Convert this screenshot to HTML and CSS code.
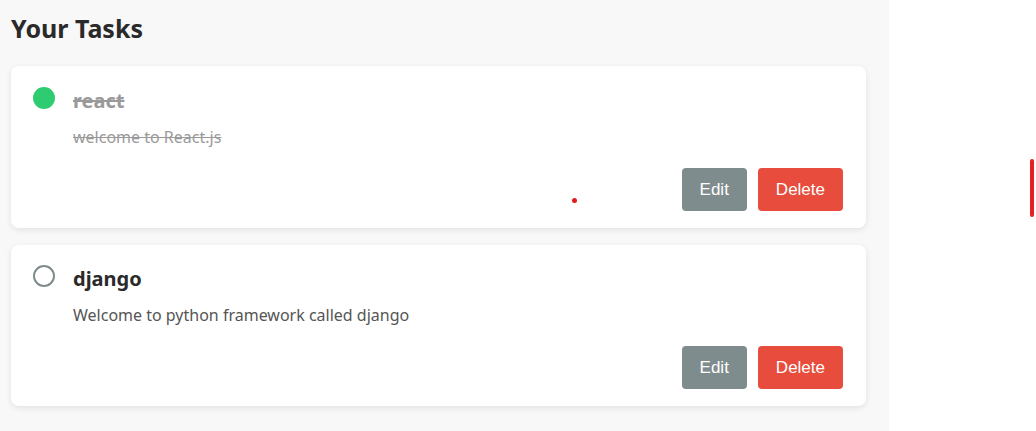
FILE: index.html
```html
<!DOCTYPE html>
<html>
<head>
<meta charset="utf-8">
<link rel="stylesheet" href="styles.css">
</head>
<body>
<div class="page">
  <main class="tasks">
    <h2 class="tasks-title">Your Tasks</h2>
    <div class="task-list">
      <div class="task-card done">
        <div class="task-row">
          <span class="check checked"></span>
          <div class="task-body">
            <h3 class="task-name">react</h3>
            <p class="task-desc">welcome to React.js</p>
          </div>
        </div>
        <div class="task-actions">
          <button class="btn btn-edit">Edit</button>
          <button class="btn btn-delete">Delete</button>
        </div>
      </div>
      <div class="task-card">
        <div class="task-row">
          <span class="check"></span>
          <div class="task-body">
            <h3 class="task-name">django</h3>
            <p class="task-desc">Welcome to python framework called django</p>
          </div>
        </div>
        <div class="task-actions">
          <button class="btn btn-edit">Edit</button>
          <button class="btn btn-delete">Delete</button>
        </div>
      </div>
    </div>
  </main>
  <aside class="side"></aside>
  <span class="dot"></span>
  <span class="bar"></span>
</div>
</body>
</html>
```
FILE: styles.css
```css
html, body {
  margin: 0;
  padding: 0;
  background: #ffffff;
}
body {
  font-family: "Noto Sans", "Open Sans", sans-serif;
  color: #2c2c2c;
}
.page {
  position: relative;
  display: flex;
  width: 1036px;
  height: 431px;
  overflow: hidden;
}
.tasks {
  width: 889px;
  box-sizing: border-box;
  background: #f8f8f8;
  padding: 10px 23px 0 11px;
}
.side {
  flex: 1;
  background: #ffffff;
}
.tasks-title {
  margin: 0 0 20px 0;
  font-size: 25px;
  line-height: 36px;
  font-weight: 700;
  color: #2a2a2a;
}
.task-list {
  display: flex;
  flex-direction: column;
  gap: 17px;
}
.task-card {
  background: #ffffff;
  border-radius: 8px;
  box-shadow: 0 2px 6px rgba(0, 0, 0, 0.09);
  padding: 21px 23px 17px 22px;
}
.task-card + .task-card {
  padding-top: 20px;
}
.task-row {
  display: flex;
  align-items: flex-start;
  gap: 18px;
}
.check {
  flex: none;
  width: 22px;
  height: 22px;
  box-sizing: border-box;
  border-radius: 50%;
  border: 2px solid #7f8c8d;
}
.check.checked {
  background: #2ecc71;
  border-color: #2ecc71;
}
.task-name {
  margin: 0;
  font-size: 20px;
  line-height: 28px;
  font-weight: 700;
  color: #2a2a2a;
}
.task-desc {
  margin: 10px 0 0 0;
  font-size: 16px;
  line-height: 24px;
  color: #555555;
}
.done .task-name,
.done .task-desc {
  color: #9a9a9a;
  text-decoration: line-through;
}
.task-actions {
  display: flex;
  justify-content: flex-end;
  gap: 11px;
  margin-top: 19px;
}
.btn {
  height: 43px;
  padding: 0 18px;
  border: none;
  border-radius: 4px;
  color: #ffffff;
  font-family: "Liberation Sans", Arial, sans-serif;
  font-size: 17px;
}
.btn-edit {
  background: #7f8c8d;
}
.btn-delete {
  background: #e74c3c;
}
.dot {
  position: absolute;
  left: 572px;
  top: 198px;
  width: 5px;
  height: 5px;
  border-radius: 50%;
  background: #e21b1b;
}
.bar {
  position: absolute;
  left: 1030px;
  top: 159px;
  width: 4px;
  height: 58px;
  border-radius: 2px;
  background: #e52020;
}
```
